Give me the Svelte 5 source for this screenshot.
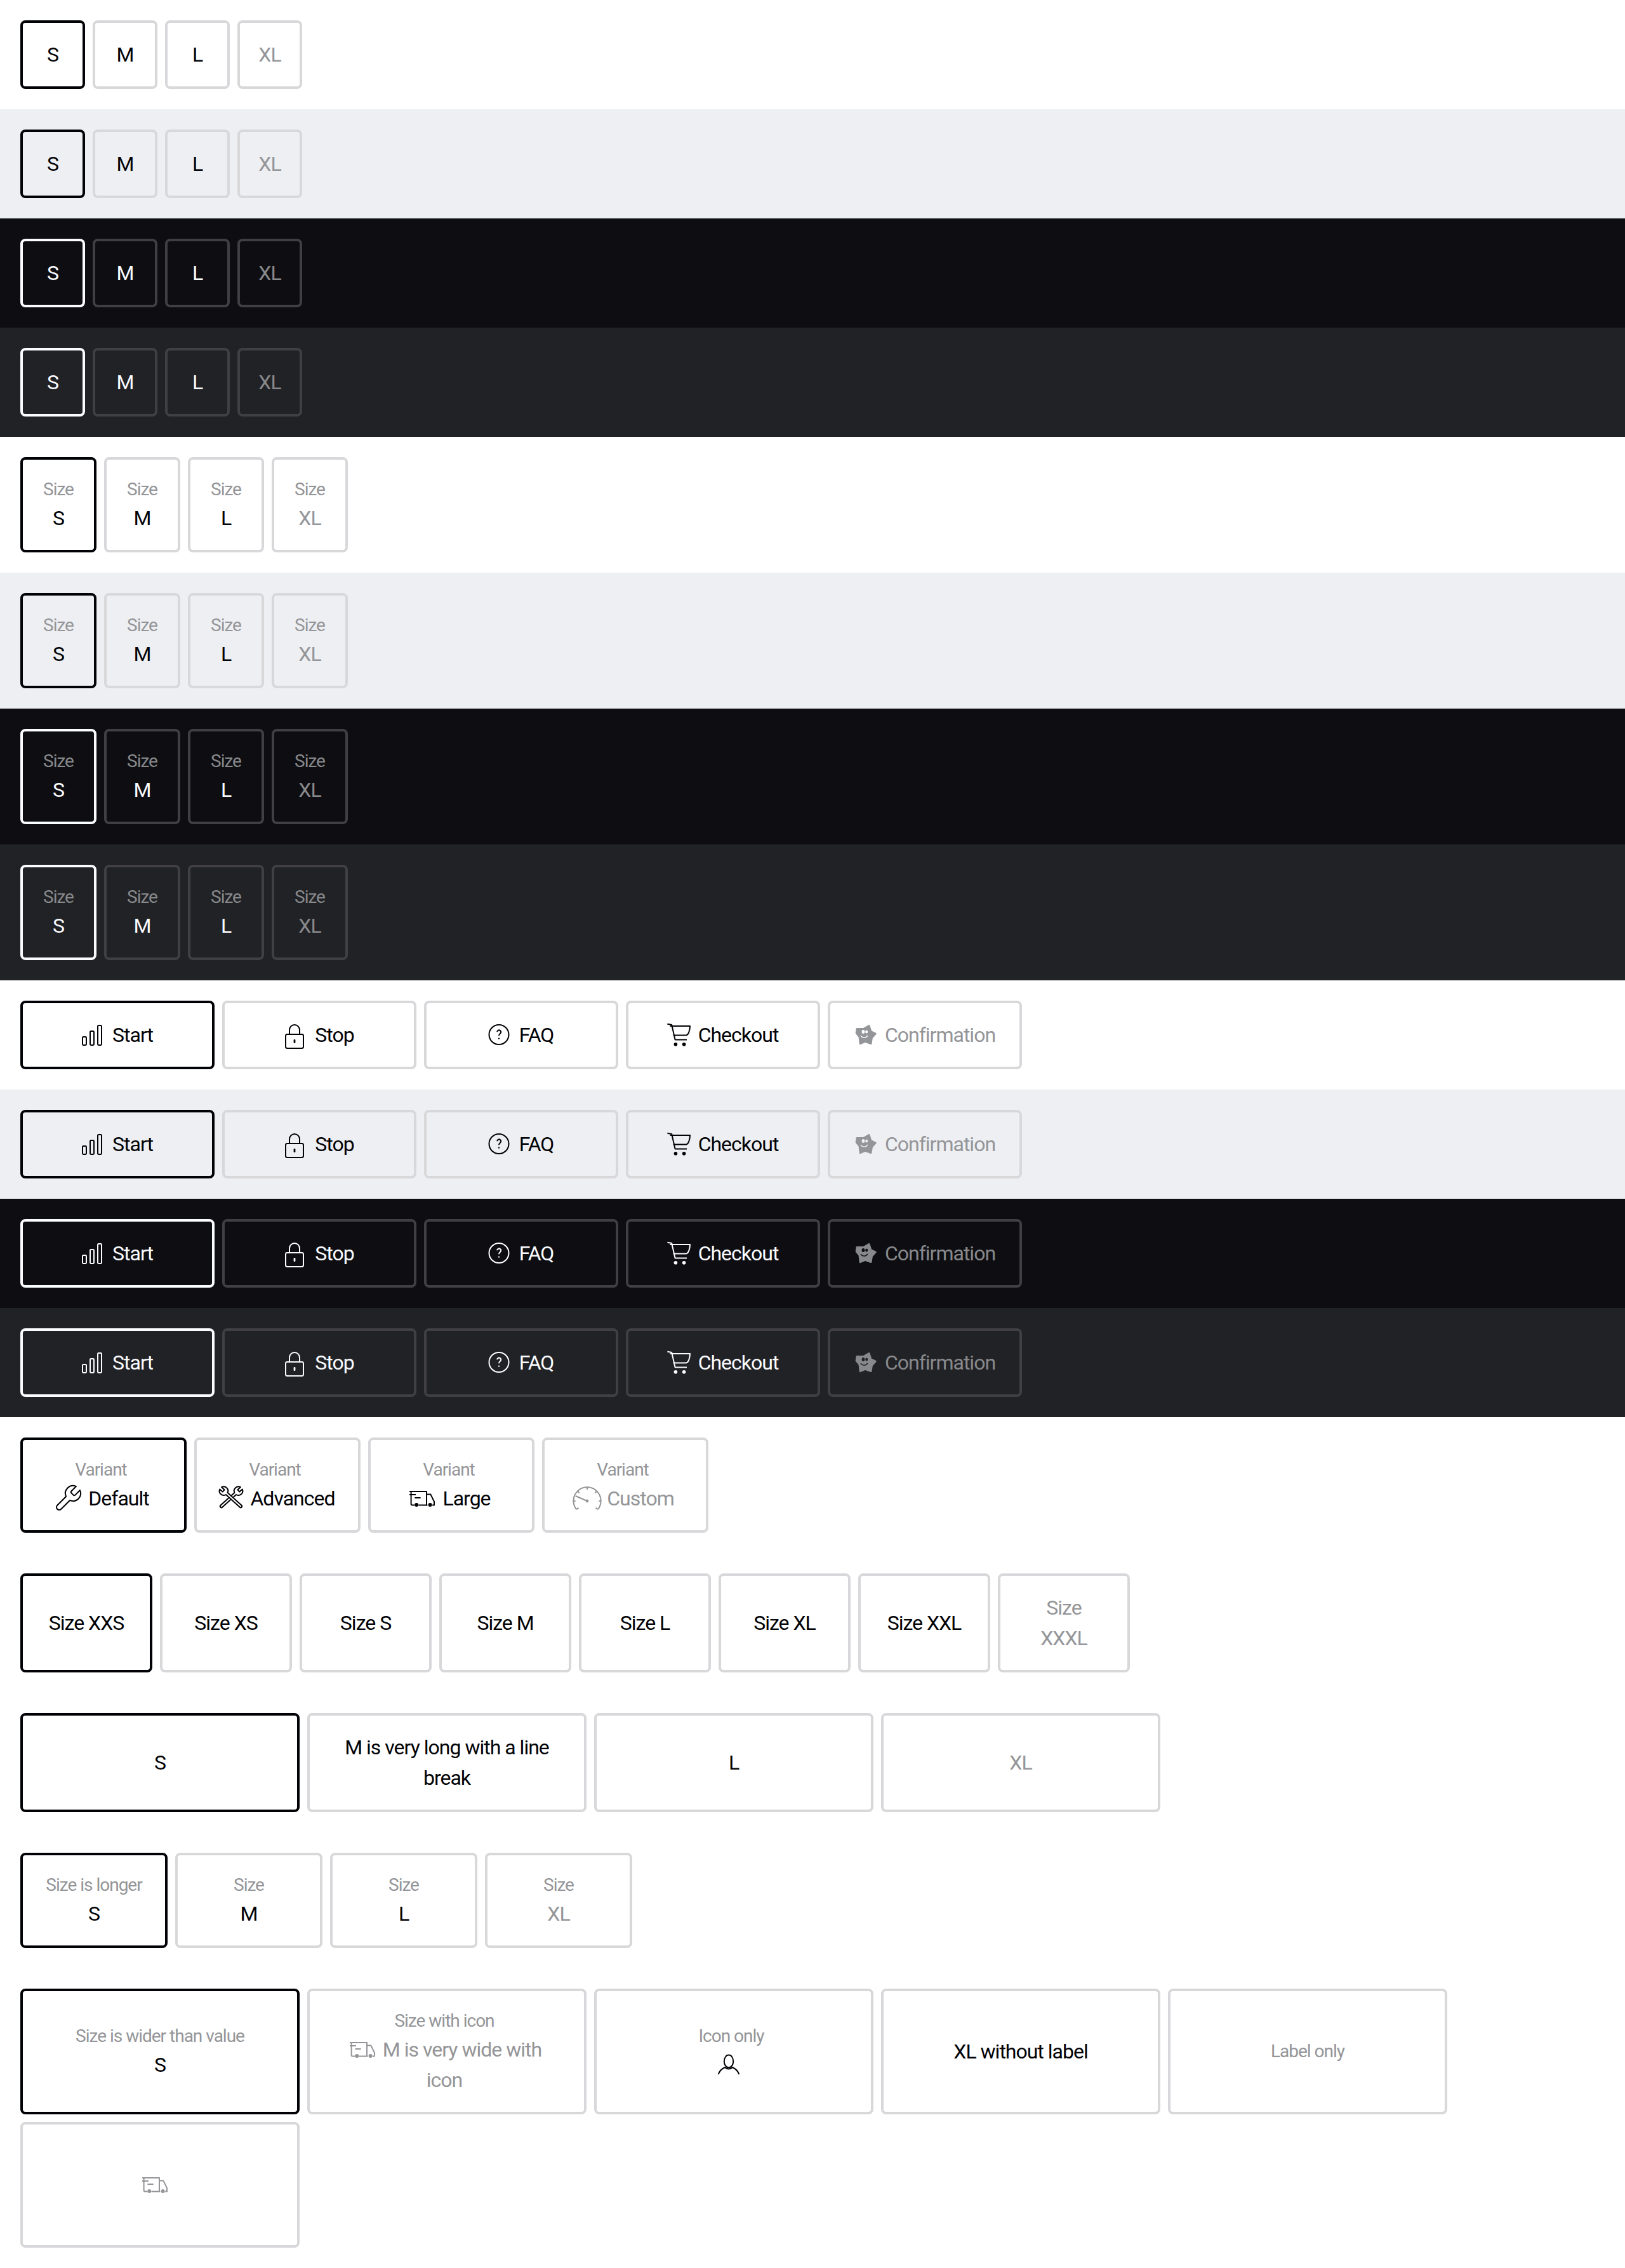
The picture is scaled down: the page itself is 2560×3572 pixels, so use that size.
<script lang="ts">
type Option = { label?: string; value?: string; icon?: string; selected?: boolean; disabled?: boolean; wrap?: string };

const THEMES = ['light', 'surface', 'dark', 'contrast'];

const sizes: Option[] = [
	{ value: 'S', selected: true },
	{ value: 'M' },
	{ value: 'L' },
	{ value: 'XL', disabled: true },
];

const labelled: Option[] = sizes.map((o) => ({ ...o, label: 'Size' }));

const actions: Option[] = [
	{ value: 'Start', icon: 'bars', selected: true },
	{ value: 'Stop', icon: 'lock' },
	{ value: 'FAQ', icon: 'question' },
	{ value: 'Checkout', icon: 'cart' },
	{ value: 'Confirmation', icon: 'star', disabled: true },
];

const variants: Option[] = [
	{ label: 'Variant', value: 'Default', icon: 'wrench', selected: true },
	{ label: 'Variant', value: 'Advanced', icon: 'tools' },
	{ label: 'Variant', value: 'Large', icon: 'truck' },
	{ label: 'Variant', value: 'Custom', icon: 'gauge', disabled: true },
];

const manySizes: Option[] = [
	{ value: 'Size XXS', selected: true },
	{ value: 'Size XS' },
	{ value: 'Size S' },
	{ value: 'Size M' },
	{ value: 'Size L' },
	{ value: 'Size XL' },
	{ value: 'Size XXL' },
	{ value: 'Size XXXL', disabled: true, wrap: 'stacked' },
];

const longValue: Option[] = [
	{ value: 'S', selected: true },
	{ value: 'M is very long with a line break' },
	{ value: 'L' },
	{ value: 'XL', disabled: true },
];

const longLabel: Option[] = [
	{ label: 'Size is longer', value: 'S', selected: true },
	{ label: 'Size', value: 'M' },
	{ label: 'Size', value: 'L' },
	{ label: 'Size', value: 'XL', disabled: true },
];

const mixed: Option[] = [
	{ label: 'Size is wider than value', value: 'S', selected: true },
	{ label: 'Size with icon', value: 'M is very wide with icon', icon: 'truck', disabled: true, wrap: 'narrow' },
	{ label: 'Icon only', icon: 'user' },
	{ value: 'XL without label' },
	{ label: 'Label only' },
	{ icon: 'truck', disabled: true },
];
</script>

{#snippet icon(name)}
	<svg class="icon" viewBox="0 0 24 24" aria-hidden="true">
		{#if name === 'bars'}
			<rect x="4.5" y="13.5" width="3" height="6.5" rx="0.7" />
			<rect x="10.5" y="9" width="3" height="11" rx="0.7" />
			<rect x="16.5" y="4.5" width="3" height="15.5" rx="0.7" />
		{:else if name === 'lock'}
			<rect x="5" y="11.5" width="14" height="11" rx="1.2" />
			<path d="M8 11.5V8a4 4 0 0 1 8 0v3.5" />
			<rect class="solid" x="11.3" y="15.5" width="1.4" height="3" rx="0.5" />
		{:else if name === 'question'}
			<circle cx="12" cy="11.75" r="7.75" />
			<path d="M10.6 9.6a1.5 1.5 0 1 1 2.4 1.3c-.6.5-1 .9-1 1.7" />
			<circle class="solid" cx="12" cy="14.8" r="0.6" />
		{:else if name === 'cart'}
			<path d="M3.7 3.4l3.4.6L9.8 15.8H19" />
			<path d="M5.8 5h15.7c0 3.5-1.3 7.3-3.3 7.3H8.3" />
			<circle class="solid" cx="10.2" cy="19.4" r="1.4" />
			<circle class="solid" cx="16.8" cy="19.4" r="1.4" />
		{:else if name === 'star'}
			<path class="solid blob" d="M6 7.2L11.3 7.3 15.5 4.8 17 9.3 20.6 11 17.7 14.2 17 18.8 12.5 17.2 8.6 18.8 8 13.4 5.6 10.5z" />
			<ellipse class="hole" cx="11" cy="9.5" rx="1.2" ry="1.5" />
			<ellipse class="hole" cx="13.6" cy="9.5" rx="1" ry="1.3" />
			<path class="smile" d="M9 12.6c1.4 2 4 2 5.4-.1" />
		{:else if name === 'wrench'}
			<path d="M14.7 6.3a1 1 0 0 0 0 1.4l1.6 1.6a1 1 0 0 0 1.4 0l3.77-3.77a6 6 0 0 1-7.94 7.94l-6.91 6.91a2.12 2.12 0 0 1-3-3l6.91-6.91a6 6 0 0 1 7.94-7.94l-3.76 3.76z" />
		{:else if name === 'tools'}
			<path class="over" transform="translate(13 11.3) rotate(48) translate(0 1.2)" d="M-1.1-12.2V-9.2H1.1V-12.2A3.4 3.4 0 0 1 1-5.75V9A1 1 0 0 1-1 9V-5.75A3.4 3.4 0 0 1-1.1-12.2z" />
			<path class="over" transform="translate(13 11.3) rotate(-48) translate(0 1.2)" d="M-1.1-12.2V-9.2H1.1V-12.2A3.4 3.4 0 0 1 1-5.75V9A1 1 0 0 1-1 9V-5.75A3.4 3.4 0 0 1-1.1-12.2z" />
		{:else if name === 'truck'}
			<path d="M2 6.5h13.5v10.8H9.2M6 17.3H4.3a1 1 0 0 1-1-1V6.5" />
			<path d="M15.5 8.8h3.2l2.8 5.7v2.8h-1.4M16.2 17.3h-1" />
			<path d="M2 9h5M6.2 11.5h4.6" />
			<circle class="solid" cx="7.6" cy="17" r="1.5" />
			<circle class="solid" cx="18.3" cy="17" r="1.5" />
		{:else if name === 'gauge'}
			<path d="M4 20.6L5.8 19.4M4 20.6A10.8 10.8 0 1 1 21 20.6M21 20.6L19.2 19.4" />
			<path d="M12.5 3.2V5M5 6.4l1.3 1.3M20 6.4l-1.3 1.3M1.7 14h1.6M23.3 14h-1.6" />
			<path d="M3.3 10l9.2 4" />
			<circle class="solid" cx="12.5" cy="14" r="1.2" />
		{:else if name === 'user'}
			<ellipse cx="12" cy="9.2" rx="3.6" ry="4.9" />
			<path d="M3.8 19.5c1-2.6 2.6-4.4 5.2-5.5 1.6 1.6 4.4 1.6 6 0 2.6 1.1 4.2 2.9 5.2 5.5" />
		{/if}
	</svg>
{/snippet}

{#snippet picker(options, size, theme)}
	<section class="row {theme}">
		<div class="options {size}">
			{#each options as o}
				<button type="button" class="option" class:selected={o.selected} class:disabled={o.disabled} class:with-icon={o.icon}>
					{#if o.label}<span class="label">{o.label}</span>{/if}
					{#if o.value || o.icon}
						<span class="value {o.wrap ?? ''}">{#if o.icon}{@render icon(o.icon)}{/if}{o.value ?? ''}</span>
					{/if}
				</button>
			{/each}
		</div>
	</section>
{/snippet}

<main>
	{#each THEMES as theme}{@render picker(sizes, 'w102', theme)}{/each}
	{#each THEMES as theme}{@render picker(labelled, 'w120', theme)}{/each}
	{#each THEMES as theme}{@render picker(actions, 'w306', theme)}{/each}
	{@render picker(variants, 'w262', 'light')}
	{@render picker(manySizes, 'w208', 'light')}
	{@render picker(longValue, 'w440', 'light')}
	{@render picker(longLabel, 'w232', 'light')}
	{@render picker(mixed, 'w440', 'light')}
</main>

<style>
	:global(body) {
		margin: 0;
		background: #fff;
	}

	main {
		font-family: Roboto, 'Liberation Sans', sans-serif;
		font-weight: 400;
		letter-spacing: -1px;
	}

	.row {
		padding: 32px;
	}

	.light {
		--bg: #fff;
		--text: #010205;
		--muted: #949598;
		--line: #d8d8db;
		--active: #010205;
		background: var(--bg);
	}

	.surface {
		--bg: #eeeff2;
		--text: #010205;
		--muted: #949598;
		--line: #d8d8db;
		--active: #010205;
		background: var(--bg);
	}

	.dark {
		--bg: #0e0e12;
		--text: #fbfcff;
		--muted: #88898c;
		--line: #404044;
		--active: #fbfcff;
		background: var(--bg);
	}

	.contrast {
		--bg: #212225;
		--text: #fbfcff;
		--muted: #88898c;
		--line: #404044;
		--active: #fbfcff;
		background: var(--bg);
	}

	.options {
		display: grid;
		grid-template-columns: repeat(auto-fill, var(--w));
		grid-auto-rows: 1fr;
		gap: 12px;
	}

	.w102 { --w: 102px; }
	.w120 { --w: 120px; }
	.w208 { --w: 208px; }
	.w232 { --w: 232px; }
	.w262 { --w: 262px; }
	.w306 { --w: 306px; }
	.w440 { --w: 440px; }

	.option {
		display: flex;
		flex-direction: column;
		justify-content: center;
		box-sizing: border-box;
		min-width: 0;
		padding: 26px 20px;
		border: 4px solid var(--line);
		border-radius: 8px;
		background: transparent;
		color: var(--text);
		font: inherit;
		letter-spacing: inherit;
		text-align: center;
	}

	.option.selected {
		border-color: var(--active);
	}

	.option.disabled {
		color: var(--muted);
	}

	.option.with-icon {
		padding-right: 28px;
	}

	.label {
		display: block;
		font-size: 28px;
		line-height: 42px;
		color: var(--muted);
	}

	.value {
		display: block;
		font-size: 32px;
		line-height: 48px;
	}

	.value.stacked {
		width: min-content;
		margin: 0 auto;
	}

	.value.narrow {
		max-width: 340px;
		margin: 0 auto;
	}

	.icon {
		display: inline-block;
		width: 48px;
		height: 48px;
		margin-right: 8px;
		vertical-align: top;
		fill: none;
		stroke: currentColor;
		stroke-width: 1;
		stroke-linejoin: round;
	}

	.icon .solid {
		fill: currentColor;
		stroke: none;
	}

	.icon .over {
		fill: var(--bg);
	}

	.icon .blob {
		stroke: currentColor;
		stroke-width: 1.5;
	}

	.icon .hole {
		fill: var(--bg);
		stroke: none;
	}

	.icon .smile {
		stroke: var(--bg);
		stroke-width: 0.7;
	}
</style>
